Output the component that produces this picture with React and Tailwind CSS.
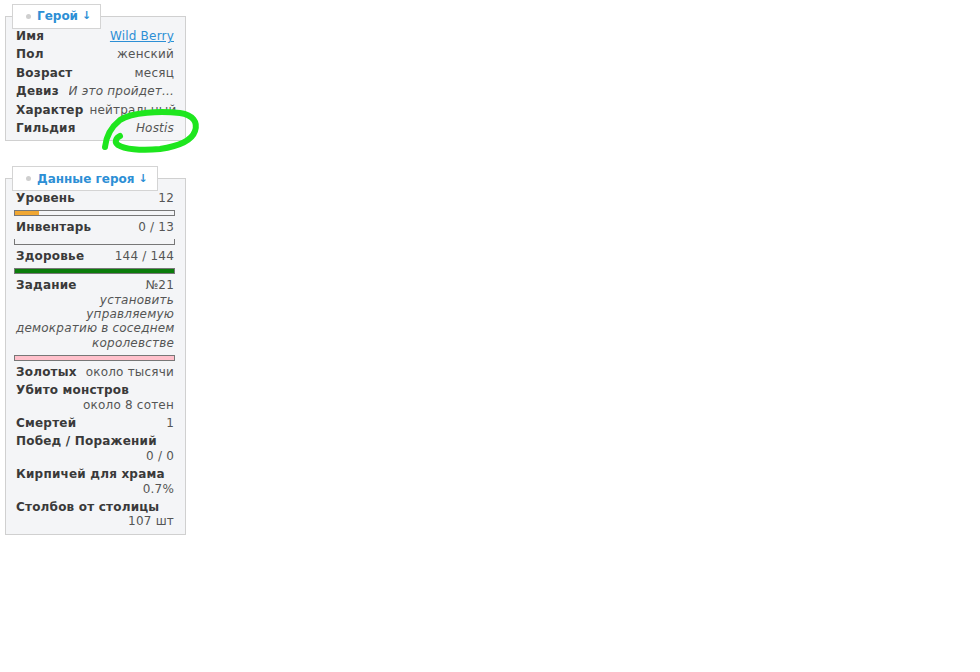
import React from "react";

const font = { fontFamily: '"DejaVu Sans", Verdana, sans-serif' };

function Tab({ title }) {
  return (
    <div className="absolute left-[6px] top-[-13px] flex h-[25px] items-center border border-[#d4d4d4] bg-white pl-[13px] pr-[9px] text-[12px] font-bold tracking-normal text-[#2d8fd5]">
      <span className="mr-[6px] h-[5px] w-[5px] rounded-full bg-[#cfcfcf]" />
      <span>{title}</span>
      <span className="ml-[4px] text-[11px]">↓</span>
    </div>
  );
}

function Panel({ title, children }) {
  return (
    <div className="relative w-[181px] border border-[#d0d0d0] bg-[#f4f5f7] pb-[5px] pl-[10px] pr-[11px] pt-[12px]">
      <Tab title={title} />
      <div className="flex flex-col gap-[4px]">{children}</div>
    </div>
  );
}

function Row({ label, value, italic, link, truncate }) {
  return (
    <div className="flex items-baseline justify-between gap-[6px] whitespace-nowrap">
      <span className="font-bold text-[#3a3a3a]">{label}</span>
      <span
        className={
          (italic ? "italic " : "") +
          (link ? "text-[#2d8fd5] underline " : "text-[#555] ") +
          (truncate ? "min-w-0 overflow-hidden text-ellipsis" : "")
        }
      >
        {value}
      </span>
    </div>
  );
}

function Stacked({ label, value }) {
  return (
    <div className="whitespace-nowrap">
      <div className="font-bold text-[#3a3a3a]">{label}</div>
      <div className="text-right text-[#555]">{value}</div>
    </div>
  );
}

function Bar({ pct, fill, empty }) {
  return (
    <div
      className={
        "ml-[-2px] mr-[-1px] mt-[4.5px] h-[6px] border-[#777] " +
        (empty ? "border-x border-b" : "border bg-[#f4f5f7]")
      }
    >
      {!empty && <div className="h-full" style={{ width: pct + "%", background: fill }} />}
    </div>
  );
}

export default function App() {
  return (
    <div className="relative min-h-[672px] bg-white" style={font}>
      <div className="flex flex-col gap-[37px] pl-[5px] pt-[16px] text-[12px] leading-[14.4px] tracking-[0.2px]">
        <Panel title="Герой">
          <Row label="Имя" value="Wild Berry" link />
          <Row label="Пол" value="женский" />
          <Row label="Возраст" value="месяц" />
          <Row label="Девиз" value="И это пройдет..." italic truncate />
          <Row label="Характер" value="нейтральный" />
          <Row label="Гильдия" value="Hostis" italic />
        </Panel>

        <Panel title="Данные героя">
          <div>
            <Row label="Уровень" value="12" />
            <Bar pct={15} fill="#f0a733" />
          </div>
          <div>
            <Row label="Инвентарь" value="0 / 13" />
            <Bar empty />
          </div>
          <div>
            <Row label="Здоровье" value="144 / 144" />
            <Bar pct={100} fill="#0b7c0b" />
          </div>
          <div>
            <Row label="Задание" value="№21" />
            <div className="whitespace-nowrap text-right italic text-[#555]">
              установить
              <br />
              управляемую
              <br />
              демократию в соседнем
              <br />
              королевстве
            </div>
            <Bar pct={100} fill="#ffc0cb" />
          </div>
          <Row label="Золотых" value="около тысячи" />
          <Stacked label="Убито монстров" value="около 8 сотен" />
          <Row label="Смертей" value="1" />
          <Stacked label="Побед / Поражений" value="0 / 0" />
          <Stacked label="Кирпичей для храма" value="0.7%" />
          <Stacked label="Столбов от столицы" value="107 шт" />
        </Panel>
      </div>

      <svg
        className="pointer-events-none absolute left-0 top-0"
        width="220"
        height="170"
        viewBox="0 0 220 170"
      >
        <path
          d="M105,147 C106,137 110,128 120,120 C132,112 160,111 180,113 C193,115 198,122 195,131 C192,140 180,146 160,149 C140,151 124,149 118,145 C114,142 116,138 120,136"
          fill="none"
          stroke="#1ee61e"
          strokeWidth="6"
          strokeLinecap="round"
          strokeLinejoin="round"
        />
      </svg>
    </div>
  );
}
